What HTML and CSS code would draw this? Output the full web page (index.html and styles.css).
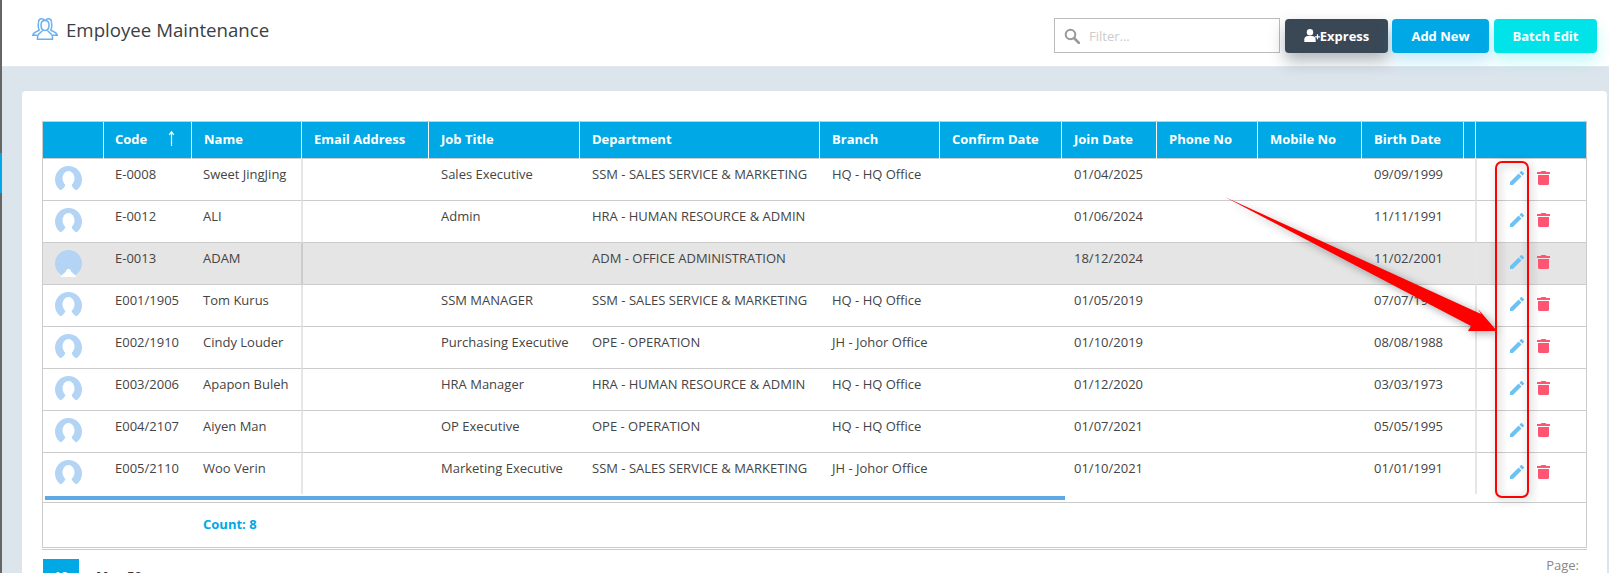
FILE: index.html
```html
<!DOCTYPE html>
<html lang="en">
<head>
<meta charset="utf-8">
<title>Employee Maintenance</title>
<link rel="stylesheet" href="styles.css">
</head>
<body>
<svg class="defs" aria-hidden="true">
  <symbol id="pencil" viewBox="3 3 18 18"><path d="M20.71,7.04C21.1,6.65 21.1,6 20.71,5.63L18.37,3.29C18,2.9 17.35,2.9 16.96,3.29L15.12,5.12L18.87,8.87M3,17.25V21H6.75L17.81,9.93L14.06,6.18L3,17.25Z"/></symbol>
  <symbol id="trash" viewBox="0 0 13 14"><path d="M4.500 0h4l1 1H13v2H0V1h3.500z"/><path d="M1 4h11v8.500a1.500 1.500 0 0 1-1.500 1.500h-8A1.500 1.500 0 0 1 1 12.500z"/></symbol>
  <symbol id="avatar" viewBox="0 0 27 27"><circle cx="13.500" cy="13.500" r="13.500" fill="#b3d4f5"/><ellipse cx="13.500" cy="12.500" rx="6" ry="7.500" fill="#fff"/><path d="M3 27C5.500 23.500 10 23 10.500 18L16.500 18C17 23 21.500 23.500 24 27Z" fill="#fff"/></symbol>
  <symbol id="avatar-solid" viewBox="0 0 27 27"><circle cx="13.500" cy="13.500" r="13.500" fill="#b3d4f5"/><path d="M6 27C7 23.500 10.500 23.500 11.500 20C12 18.500 15 18.500 15.500 20C16.500 23.500 20 23.500 21 27Z" fill="#fff"/></symbol>
</svg>
<div class="app">
  <aside class="rail"><div class="rail-active"></div></aside>
  <main class="main">
    <header class="topbar">
      <svg class="title-icon" viewBox="0 0 26 22" fill="none" stroke="#6ab0ee" stroke-width="1.500" aria-hidden="true">
        <path d="M6.500 4.500C6.500 2 8 .8 9.800 .8C11 .8 12 1.400 12.500 2.300"/>
        <path d="M7.800 12.500C7 11.800 6.400 10.500 6.300 9C6.100 7.500 6.300 6 6.500 4.500"/>
        <path d="M7 12.300C5 13.500 1.500 14 .8 17.200H5.500"/>
        <path d="M19.500 4.500C19.500 2 18 .8 16.200 .8C15 .8 14 1.400 13.500 2.300"/>
        <path d="M18.200 12.500C19 11.800 19.600 10.500 19.700 9C19.900 7.500 19.700 6 19.500 4.500"/>
        <path d="M19 12.300C21 13.500 24.500 14 25.200 17.200H20.500"/>
        <path d="M13 2.500C15.500 2.500 17 4.200 17 7C17 10 15.700 12.500 13 12.500C10.300 12.500 9 10 9 7C9 4.200 10.500 2.500 13 2.500Z"/>
        <path d="M10.500 12.300C10.300 14.300 5.500 15 5.500 19V21.200H20.500V19C20.500 15 15.700 14.300 15.500 12.300"/>
      </svg>
      <h1 class="title">Employee Maintenance</h1>
      <div class="actions">
        <label class="filter">
          <svg class="filter-icon" viewBox="0 0 16 16" fill="none" stroke="#999" aria-hidden="true"><circle cx="6.500" cy="6.500" r="4.800" stroke-width="2"/><path d="M10 10l4.800 4.800" stroke-width="2.600" stroke-linecap="round"/></svg>
          <input class="filter-input" type="text" placeholder="Filter...">
        </label>
        <button class="btn btn-dark" type="button">
          <svg class="btn-icon" viewBox="0 0 16 13" fill="#fff" aria-hidden="true"><circle cx="6" cy="3.200" r="3.200"/><path d="M.3 13V10.500C.3 8.300 2 7 3.800 7H8.200C10 7 11.700 8.300 11.700 10.500V13Z"/><path d="M11 7.200h1.900V5.300h1.200v1.900H16v1.200h-1.900v1.900h-1.200V8.400H11z"/></svg>Express
        </button>
        <button class="btn btn-blue" type="button">Add New</button>
        <button class="btn btn-cyan" type="button">Batch Edit</button>
      </div>
    </header>
    <section class="card">
      <div class="frame">
        <table class="grid">
          <colgroup>
            <col class="c-avatar"><col class="c-code"><col class="c-name"><col class="c-email"><col class="c-job"><col class="c-dept"><col class="c-branch"><col class="c-confirm"><col class="c-join"><col class="c-phone"><col class="c-mobile"><col class="c-birth"><col class="c-gap"><col class="c-act">
          </colgroup>
          <thead>
            <tr>
              <th></th>
              <th class="sorted">Code<svg class="sort" viewBox="0 0 7 15" fill="none" stroke="#fff" stroke-width="1.200" aria-hidden="true"><path d="M3.500 15V1M1.200 3.800L3.500 .8L5.800 3.800"/></svg></th>
              <th>Name</th><th>Email Address</th><th>Job Title</th><th>Department</th><th>Branch</th><th>Confirm Date</th><th>Join Date</th><th>Phone No</th><th>Mobile No</th><th>Birth Date</th><th></th><th></th>
            </tr>
          </thead>
          <tbody>
            <tr>
              <td class="av"><svg class="avatar"><use href="#avatar"/></svg></td><td>E-0008</td><td>Sweet JingJing</td><td class="divide"></td><td>Sales Executive</td><td>SSM - SALES SERVICE &amp; MARKETING</td><td>HQ - HQ Office</td><td></td><td>01/04/2025</td><td></td><td></td><td>09/09/1999</td><td></td>
              <td class="divide"><div class="row-actions"><svg class="ic-edit"><use href="#pencil"/></svg><svg class="ic-del"><use href="#trash"/></svg></div></td>
            </tr>
            <tr>
              <td class="av"><svg class="avatar"><use href="#avatar"/></svg></td><td>E-0012</td><td>ALI</td><td class="divide"></td><td>Admin</td><td>HRA - HUMAN RESOURCE &amp; ADMIN</td><td></td><td></td><td>01/06/2024</td><td></td><td></td><td>11/11/1991</td><td></td>
              <td class="divide"><div class="row-actions"><svg class="ic-edit"><use href="#pencil"/></svg><svg class="ic-del"><use href="#trash"/></svg></div></td>
            </tr>
            <tr class="selected">
              <td class="av"><svg class="avatar"><use href="#avatar-solid"/></svg></td><td>E-0013</td><td>ADAM</td><td class="divide"></td><td></td><td>ADM - OFFICE ADMINISTRATION</td><td></td><td></td><td>18/12/2024</td><td></td><td></td><td>11/02/2001</td><td></td>
              <td class="divide"><div class="row-actions"><svg class="ic-edit"><use href="#pencil"/></svg><svg class="ic-del"><use href="#trash"/></svg></div></td>
            </tr>
            <tr>
              <td class="av"><svg class="avatar"><use href="#avatar"/></svg></td><td>E001/1905</td><td>Tom Kurus</td><td class="divide"></td><td>SSM MANAGER</td><td>SSM - SALES SERVICE &amp; MARKETING</td><td>HQ - HQ Office</td><td></td><td>01/05/2019</td><td></td><td></td><td>07/07/1975</td><td></td>
              <td class="divide"><div class="row-actions"><svg class="ic-edit"><use href="#pencil"/></svg><svg class="ic-del"><use href="#trash"/></svg></div></td>
            </tr>
            <tr>
              <td class="av"><svg class="avatar"><use href="#avatar"/></svg></td><td>E002/1910</td><td>Cindy Louder</td><td class="divide"></td><td>Purchasing Executive</td><td>OPE - OPERATION</td><td>JH - Johor Office</td><td></td><td>01/10/2019</td><td></td><td></td><td>08/08/1988</td><td></td>
              <td class="divide"><div class="row-actions"><svg class="ic-edit"><use href="#pencil"/></svg><svg class="ic-del"><use href="#trash"/></svg></div></td>
            </tr>
            <tr>
              <td class="av"><svg class="avatar"><use href="#avatar"/></svg></td><td>E003/2006</td><td>Apapon Buleh</td><td class="divide"></td><td>HRA Manager</td><td>HRA - HUMAN RESOURCE &amp; ADMIN</td><td>HQ - HQ Office</td><td></td><td>01/12/2020</td><td></td><td></td><td>03/03/1973</td><td></td>
              <td class="divide"><div class="row-actions"><svg class="ic-edit"><use href="#pencil"/></svg><svg class="ic-del"><use href="#trash"/></svg></div></td>
            </tr>
            <tr>
              <td class="av"><svg class="avatar"><use href="#avatar"/></svg></td><td>E004/2107</td><td>Aiyen Man</td><td class="divide"></td><td>OP Executive</td><td>OPE - OPERATION</td><td>HQ - HQ Office</td><td></td><td>01/07/2021</td><td></td><td></td><td>05/05/1995</td><td></td>
              <td class="divide"><div class="row-actions"><svg class="ic-edit"><use href="#pencil"/></svg><svg class="ic-del"><use href="#trash"/></svg></div></td>
            </tr>
            <tr>
              <td class="av"><svg class="avatar"><use href="#avatar"/></svg></td><td>E005/2110</td><td>Woo Verin</td><td class="divide"></td><td>Marketing Executive</td><td>SSM - SALES SERVICE &amp; MARKETING</td><td>JH - Johor Office</td><td></td><td>01/10/2021</td><td></td><td></td><td>01/01/1991</td><td></td>
              <td class="divide"><div class="row-actions"><svg class="ic-edit"><use href="#pencil"/></svg><svg class="ic-del"><use href="#trash"/></svg></div></td>
            </tr>
          </tbody>
        </table>
        <div class="scrollbar"></div>
        <div class="summary"><span class="count">Count: 8</span></div>
      </div>
      <div class="rule"></div>
      <div class="pager">
        <span class="page-size">10</span>
        <span class="page-info">Max 50</span>
        <span class="page-label">Page:</span>
      </div>
    </section>
  </main>
</div>
<svg class="callout" viewBox="0 0 1609 573" aria-hidden="true">
  <rect x="1496" y="162" width="32" height="335" rx="6" fill="none" stroke="#ff0000" stroke-width="2"/>
  <polygon points="1225,197 1481,314 1478,309 1497,331 1468,331 1471,326" fill="#ff0000"/>
</svg>
</body>
</html>
```

FILE: styles.css
```css
* { box-sizing: border-box; }
html, body { margin: 0; height: 573px; overflow: hidden; }
body { position: relative; font-family: "Open Sans", sans-serif; font-size: 13px; color: #444; background: #dce4ec; }
.defs { position: absolute; width: 0; height: 0; }

.app { display: flex; height: 573px; overflow: hidden; }
.rail { flex: 0 0 2px; background: #666; padding-top: 153px; }
.rail-active { height: 40px; background: #00a8e6; }
.main { flex: 1; min-width: 0; }

.topbar { display: flex; align-items: center; height: 67px; padding: 0 12px 0 30px; background: #fff; border-bottom: 1px solid #e3e9ef; }
.title-icon { width: 26px; height: 22px; margin: -9px 8px 0 0; }
.title { margin: -8px 0 0; font-size: 18.67px; font-weight: 500; color: #3a3f44; }
.actions { display: flex; align-items: center; margin-left: auto; margin-top: 5px; }
.filter { display: flex; align-items: center; width: 226px; height: 35px; margin-right: 5px; padding-left: 9px; border: 1px solid #bbb; background: #fff; }
.filter-icon { flex: none; width: 16px; height: 16px; margin-right: 9px; }
.filter-input { flex: 1; min-width: 0; border: 0; outline: 0; padding: 0; font: 13px "Open Sans", sans-serif; color: #444; }
.filter-input::placeholder { color: #ccc; opacity: 1; }
.btn { display: flex; align-items: center; justify-content: center; height: 34px; border: 0; border-radius: 4px; padding: 0; font: 700 13px "Open Sans", sans-serif; color: #fff; }
.btn-dark { width: 103px; margin-right: 4px; background: #3a4856; box-shadow: 0 8px 16px rgba(58, 72, 86, .4); }
.btn-blue { width: 97px; margin-right: 5px; background: #00a8e6; box-shadow: 0 8px 16px rgba(0, 168, 230, .25); }
.btn-cyan { width: 103px; background: #00e3e8; box-shadow: 0 8px 16px rgba(0, 227, 232, .25); }
.btn-icon { width: 16px; height: 13px; }

.card { margin: 24px 2px 0 20px; padding: 30px 20px 0; height: 500px; background: #fff; border-radius: 4px; }
.frame { width: 1545px; border: 1px solid #ccc; }
.grid { width: 1543px; table-layout: fixed; border-collapse: separate; border-spacing: 0; }
.c-avatar { width: 60px; } .c-code { width: 88px; } .c-name { width: 110px; } .c-email { width: 127px; }
.c-job { width: 151px; } .c-dept { width: 240px; } .c-branch { width: 120px; } .c-confirm { width: 122px; }
.c-join { width: 95px; } .c-phone { width: 101px; } .c-mobile { width: 104px; } .c-birth { width: 102px; }
.c-gap { width: 12px; } .c-act { width: 111px; }

.grid th { height: 37px; padding: 0 0 3px 12px; background: #00a8e6; color: #fff; font-weight: 700; text-align: left; line-height: 18px; border-left: 1px solid #fff; border-bottom: 1px solid #ccc; white-space: nowrap; }
.grid th:first-child { border-left: 0; }
.grid .sorted { position: relative; padding-left: 11px; }
.sort { position: absolute; left: 64px; top: 9px; width: 7px; height: 15px; }
.grid td { height: 42px; padding: 6px 0 0 12px; line-height: 18px; vertical-align: top; color: #444; border-bottom: 1px solid #ccc; white-space: nowrap; overflow: hidden; }
.grid td:nth-child(n+5) { padding-left: 13px; }
.grid tbody tr:last-child td { height: 41px; border-bottom: 0; }
.grid .divide, .grid td.divide:nth-child(n+5) { border-left: 2px solid #e6e6e6; padding-left: 0; }
.selected td { background: #e5e5e5; }
.grid .selected .divide { border-left-color: #ccc; }
.grid .av { padding: 7px 0 0 12px; }
.avatar { display: block; width: 27px; height: 27px; }
.row-actions { display: flex; gap: 13px; padding: 6px 0 0 33px; }
.ic-edit { width: 14px; height: 14px; fill: #6ec1f0; }
.ic-del { width: 13px; height: 14px; fill: #ff5573; }

.scrollbar { width: 1020px; height: 4px; margin: 2px 0 2px 2px; background: #5ea8e6; }
.summary { height: 45px; padding: 12px 0 0 160px; border-top: 1px solid #ccc; line-height: 18px; }
.count { font-weight: 700; color: #00a8e6; }
.rule { width: 1545px; height: 1px; margin-top: 1px; background: #ccc; }
.pager { display: flex; width: 1545px; padding: 9px 8px 0 1px; line-height: 18px; }
.page-size { width: 36px; height: 36px; padding-top: 8px; background: #00a8e6; color: #fff; text-align: center; font-weight: 700; }
.page-info { margin: 8px 0 0 17px; font-weight: 700; color: #333; }
.page-label { margin: -1px 0 0 auto; line-height: 14px; color: #888; }

.callout { position: absolute; left: 0; top: 0; width: 1609px; height: 573px; pointer-events: none; filter: drop-shadow(2px 2px 4px rgba(0, 0, 0, .35)); }
```
